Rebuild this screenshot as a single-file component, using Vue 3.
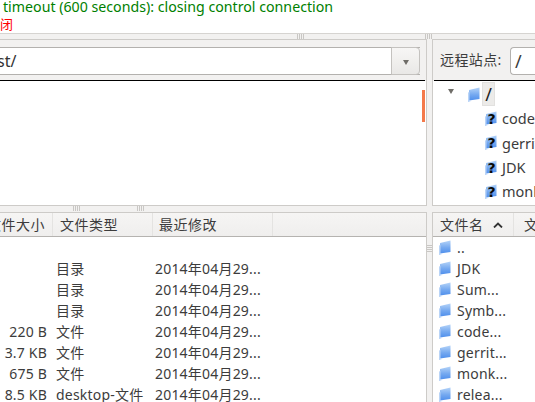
<script setup>
const leftRows = [
  { size: '', type: '', date: '' },
  { size: '', type: '目录', date: '2014年04月29...' },
  { size: '', type: '目录', date: '2014年04月29...' },
  { size: '', type: '目录', date: '2014年04月29...' },
  { size: '220 B', type: '文件', date: '2014年04月29...' },
  { size: '3.7 KB', type: '文件', date: '2014年04月29...' },
  { size: '675 B', type: '文件', date: '2014年04月29...' },
  { size: '8.5 KB', type: 'desktop-文件', date: '2014年04月29...' }
]
const treeRows = ['code', 'gerrit', 'JDK', 'monkey']
const remoteFiles = ['..', 'JDK', 'Sum...', 'Symb...', 'code...', 'gerrit...', 'monk...', 'relea...']
</script>

<template>
  <div class="app">
    <div class="log">
      <div class="log-line ok">timeout (600 seconds): closing control connection</div>
      <div class="log-line err">闭</div>
    </div>
    <div class="panes">
      <i class="grip grip-v g1"></i>
      <i class="grip grip-v g2"></i>
      <i class="grip grip-v g3"></i>
      <i class="grip grip-v g4"></i>
      <i class="grip grip-h g5"></i>

      <section class="pane pane-left">
        <div class="upper">
          <div class="toolbar">
            <div class="combo">
              <div class="combo-field">st/</div>
              <div class="combo-btn"><span class="arrow"></span></div>
            </div>
          </div>
          <div class="view view-left"><i class="scroll-mark"></i></div>
        </div>
        <div class="lower">
          <div class="head head-left">
            <div class="hcell hsize"><span>文件大小</span></div>
            <div class="hcell htype">文件类型</div>
            <div class="hcell hdate">最近修改</div>
          </div>
          <div class="list">
            <div v-for="(r, i) in leftRows" :key="i" class="row row-left">
              <span class="size">{{ r.size }}</span>
              <span class="type">{{ r.type }}</span>
              <span class="date">{{ r.date }}</span>
            </div>
          </div>
        </div>
      </section>

      <section class="pane pane-right">
        <div class="upper">
          <div class="toolbar toolbar-right">
            <span class="site-label">远程站点:</span>
            <div class="site-field">/</div>
          </div>
          <div class="view view-right">
            <div class="tree-root">
              <span class="tree-arrow"></span>
              <svg class="folder" viewBox="0 0 12 15">
                <use href="#fld" />
              </svg>
              <span class="tree-sel">/</span>
            </div>
            <div v-for="t in treeRows" :key="t" class="tree-row">
              <svg class="folder" viewBox="0 0 12 15">
                <use href="#fld" />
                <text x="6.5" y="12.5" text-anchor="middle" class="q">?</text>
              </svg>
              <span>{{ t }}</span>
            </div>
          </div>
        </div>
        <div class="lower">
          <div class="head head-right">
            <div class="hcell hname">文件名
              <svg class="caret" viewBox="0 0 10 6"><path d="M1 5.5 5 1.5l4 4" /></svg>
            </div>
            <div class="hcell hnext">文件大小</div>
          </div>
          <div class="list">
            <div v-for="f in remoteFiles" :key="f" class="row row-right">
              <svg class="folder" viewBox="0 0 12 15"><use href="#fld" /></svg>
              <span>{{ f }}</span>
            </div>
          </div>
        </div>
      </section>
    </div>

    <svg class="defs" width="0" height="0">
      <defs>
        <linearGradient id="fg" x1="0" y1="0" x2="0" y2="1">
          <stop offset="0" stop-color="#b4d3f8" />
          <stop offset="0.55" stop-color="#75a9f0" />
          <stop offset="1" stop-color="#4f8fec" />
        </linearGradient>
        <g id="fld">
          <path d="M1 3 11.5 .5v11.5L1 13.5z" fill="url(#fg)" />
          <path d="M0 5.5 1.5 5v8.5L3 14 .5 15 0 15z" fill="#b9d4f7" />
        </g>
      </defs>
    </svg>
  </div>
</template>

<style>
html, body { margin: 0; background: #fff; overflow: hidden; }
</style>

<style scoped>
.app {
  position: relative;
  width: 535px;
  height: 402px;
  overflow: hidden;
  display: flex;
  flex-direction: column;
  background: #f2f1f0;
  color: #3c3c3c;
  font: 14px/1 "Noto Sans", "Noto Sans CJK SC", sans-serif;
}
.log {
  height: 33px;
  background: #fff;
  border-bottom: 1px solid #d6d4d1;
  flex: none;
}
.log-line { height: 18px; line-height: 13px; white-space: nowrap; }
.ok { color: #008000; padding-left: 3px; font-size: 14.2px; }
.err { color: #ff0000; padding-left: 0; font-size: 13px; }
.panes {
  position: relative;
  flex: 1;
  min-height: 0;
  display: flex;
  gap: 5px;
  padding-top: 5px;
}
.grip {
  position: absolute;
  display: block;
}
.grip-v {
  width: 7px;
  height: 5px;
  background: repeating-linear-gradient(90deg, #c9c7c4 0 1px, transparent 1px 2px);
}
.g1 { left: 297px; top: 0; }
.g2 { left: 425px; top: 0; }
.g3 { left: 73px; top: 172px; }
.g4 { left: 137px; top: 172px; }
.grip-h {
  left: 427px;
  top: 211px;
  width: 5px;
  height: 7px;
  background: repeating-linear-gradient(0deg, #c9c7c4 0 1px, transparent 1px 2px);
}
.pane {
  flex: none;
  display: flex;
  flex-direction: column;
  gap: 6px;
  min-height: 0;
}
.pane-left { width: 427px; }
.pane-right { flex: 1; }
.upper {
  height: 167px;
  flex: none;
  border-top: 1px solid #cdcbc8;
  box-sizing: border-box;
  border-bottom: 1px solid #cdcbc8;
  display: flex;
  flex-direction: column;
}
.pane-left .upper, .pane-left .lower { border-right: 1px solid #cdcbc8; }
.pane-right .upper, .pane-right .lower { border-left: 1px solid #cdcbc8; }
.toolbar {
  height: 41px;
  flex: none;
  box-sizing: border-box;
  padding-top: 7px;
  display: flex;
  border-bottom: 1px solid #000;
}
.pane-left .toolbar { margin-right: 1px; }
.pane-right .toolbar { margin-left: 1px; }
.combo {
  flex: 1;
  height: 28px;
  display: flex;
  margin-right: 5px;
  border-top: 1px solid #b3b1ae;
  border-bottom: 1px solid #b3b1ae;
  box-sizing: border-box;
}
.combo-field {
  flex: 1;
  background: #fff;
  line-height: 26px;
  font-size: 16px;
  color: #333;
  text-indent: -3px;
}
.combo-btn {
  width: 27px;
  border: 1px solid #c4c2bf;
  border-radius: 0 4px 4px 0;
  background: linear-gradient(#f7f6f5, #e9e8e6);
  margin: -1px 0;
  display: flex;
  align-items: center;
  justify-content: center;
}
.arrow, .tree-arrow {
  display: block;
  width: 0;
  height: 0;
  border-left: 3.5px solid transparent;
  border-right: 3.5px solid transparent;
  border-top: 5px solid #6f6d68;
}
.arrow { margin-top: 3px; }
.toolbar-right { padding-left: 6px; }
.site-label {
  width: 70px;
  flex: none;
  line-height: 26px;
  font-size: 14px;
  letter-spacing: 0.4px;
  white-space: nowrap;
}
.site-field {
  flex: 1;
  height: 28px;
  box-sizing: border-box;
  background: #fff;
  border: 1px solid #b3b1ae;
  border-right: 0;
  border-radius: 4px 0 0 4px;
  line-height: 26px;
  font-size: 18px;
  padding-left: 4px;
}
.view { flex: 1; background: #fff; position: relative; min-height: 0; }
.scroll-mark {
  position: absolute;
  left: 422px;
  top: 9px;
  width: 3px;
  height: 32px;
  background: #f4794a;
}
.view-right { padding-top: 1px; overflow: hidden; }
.tree-root {
  display: flex;
  align-items: center;
  height: 24.5px;
  padding-left: 15px;
}
.tree-arrow { margin-right: 14px; margin-top: -6px; }
.tree-sel {
  width: 13px;
  height: 24px;
  margin-left: 2px;
  background: #ecebe9;
  border: 1px solid #e2e1df;
  box-sizing: border-box;
  line-height: 22px;
  font-size: 18px;
  text-align: center;
  color: #222;
}
.folder { width: 12px; height: 15px; flex: none; display: block; }
.tree-row {
  display: flex;
  align-items: center;
  height: 24.3px;
  padding-left: 52px;
  gap: 5px;
  white-space: nowrap;
  font-size: 14.5px;
}
.q { font: 900 14px "DejaVu Sans", sans-serif; fill: #0a0a0a; }
.lower {
  flex: 1;
  min-height: 0;
  border-top: 1px solid #cdcbc8;
  box-sizing: border-box;
  display: flex;
  flex-direction: column;
}
.head {
  height: 24px;
  flex: none;
  display: flex;
  box-sizing: border-box;
  border-bottom: 1px solid #b5b3b0;
  background: linear-gradient(#f6f5f4, #efeeed);
  font-size: 14px;
  letter-spacing: 0.5px;
  white-space: nowrap;
  line-height: 24px;
}
.hcell { box-sizing: border-box; border-right: 1px solid #e4e3e1; flex: none; }
.hsize { width: 53px; overflow: hidden; display: flex; justify-content: flex-end; padding-right: 7px; }
.hsize span { flex: none; }
.htype { width: 100px; padding-left: 7px; }
.hdate { width: 120px; padding-left: 6px; }
.hname { width: 81px; padding-left: 7px; display: flex; align-items: center; gap: 9px; }
.hnext { padding-left: 10px; border-right: 0; }
.caret { width: 10px; height: 6px; }
.caret path { fill: none; stroke: #333; stroke-width: 1.8; }
.list { flex: 1; background: #fff; overflow: hidden; letter-spacing: 0.2px; }
.row { height: 21px; display: flex; align-items: center; white-space: nowrap; }
.size { width: 47px; text-align: right; flex: none; margin-right: 9px; }
.type { width: 99px; flex: none; }
.row-right { padding-left: 6px; gap: 6px; font-size: 14px; }
.defs { position: absolute; }
</style>
